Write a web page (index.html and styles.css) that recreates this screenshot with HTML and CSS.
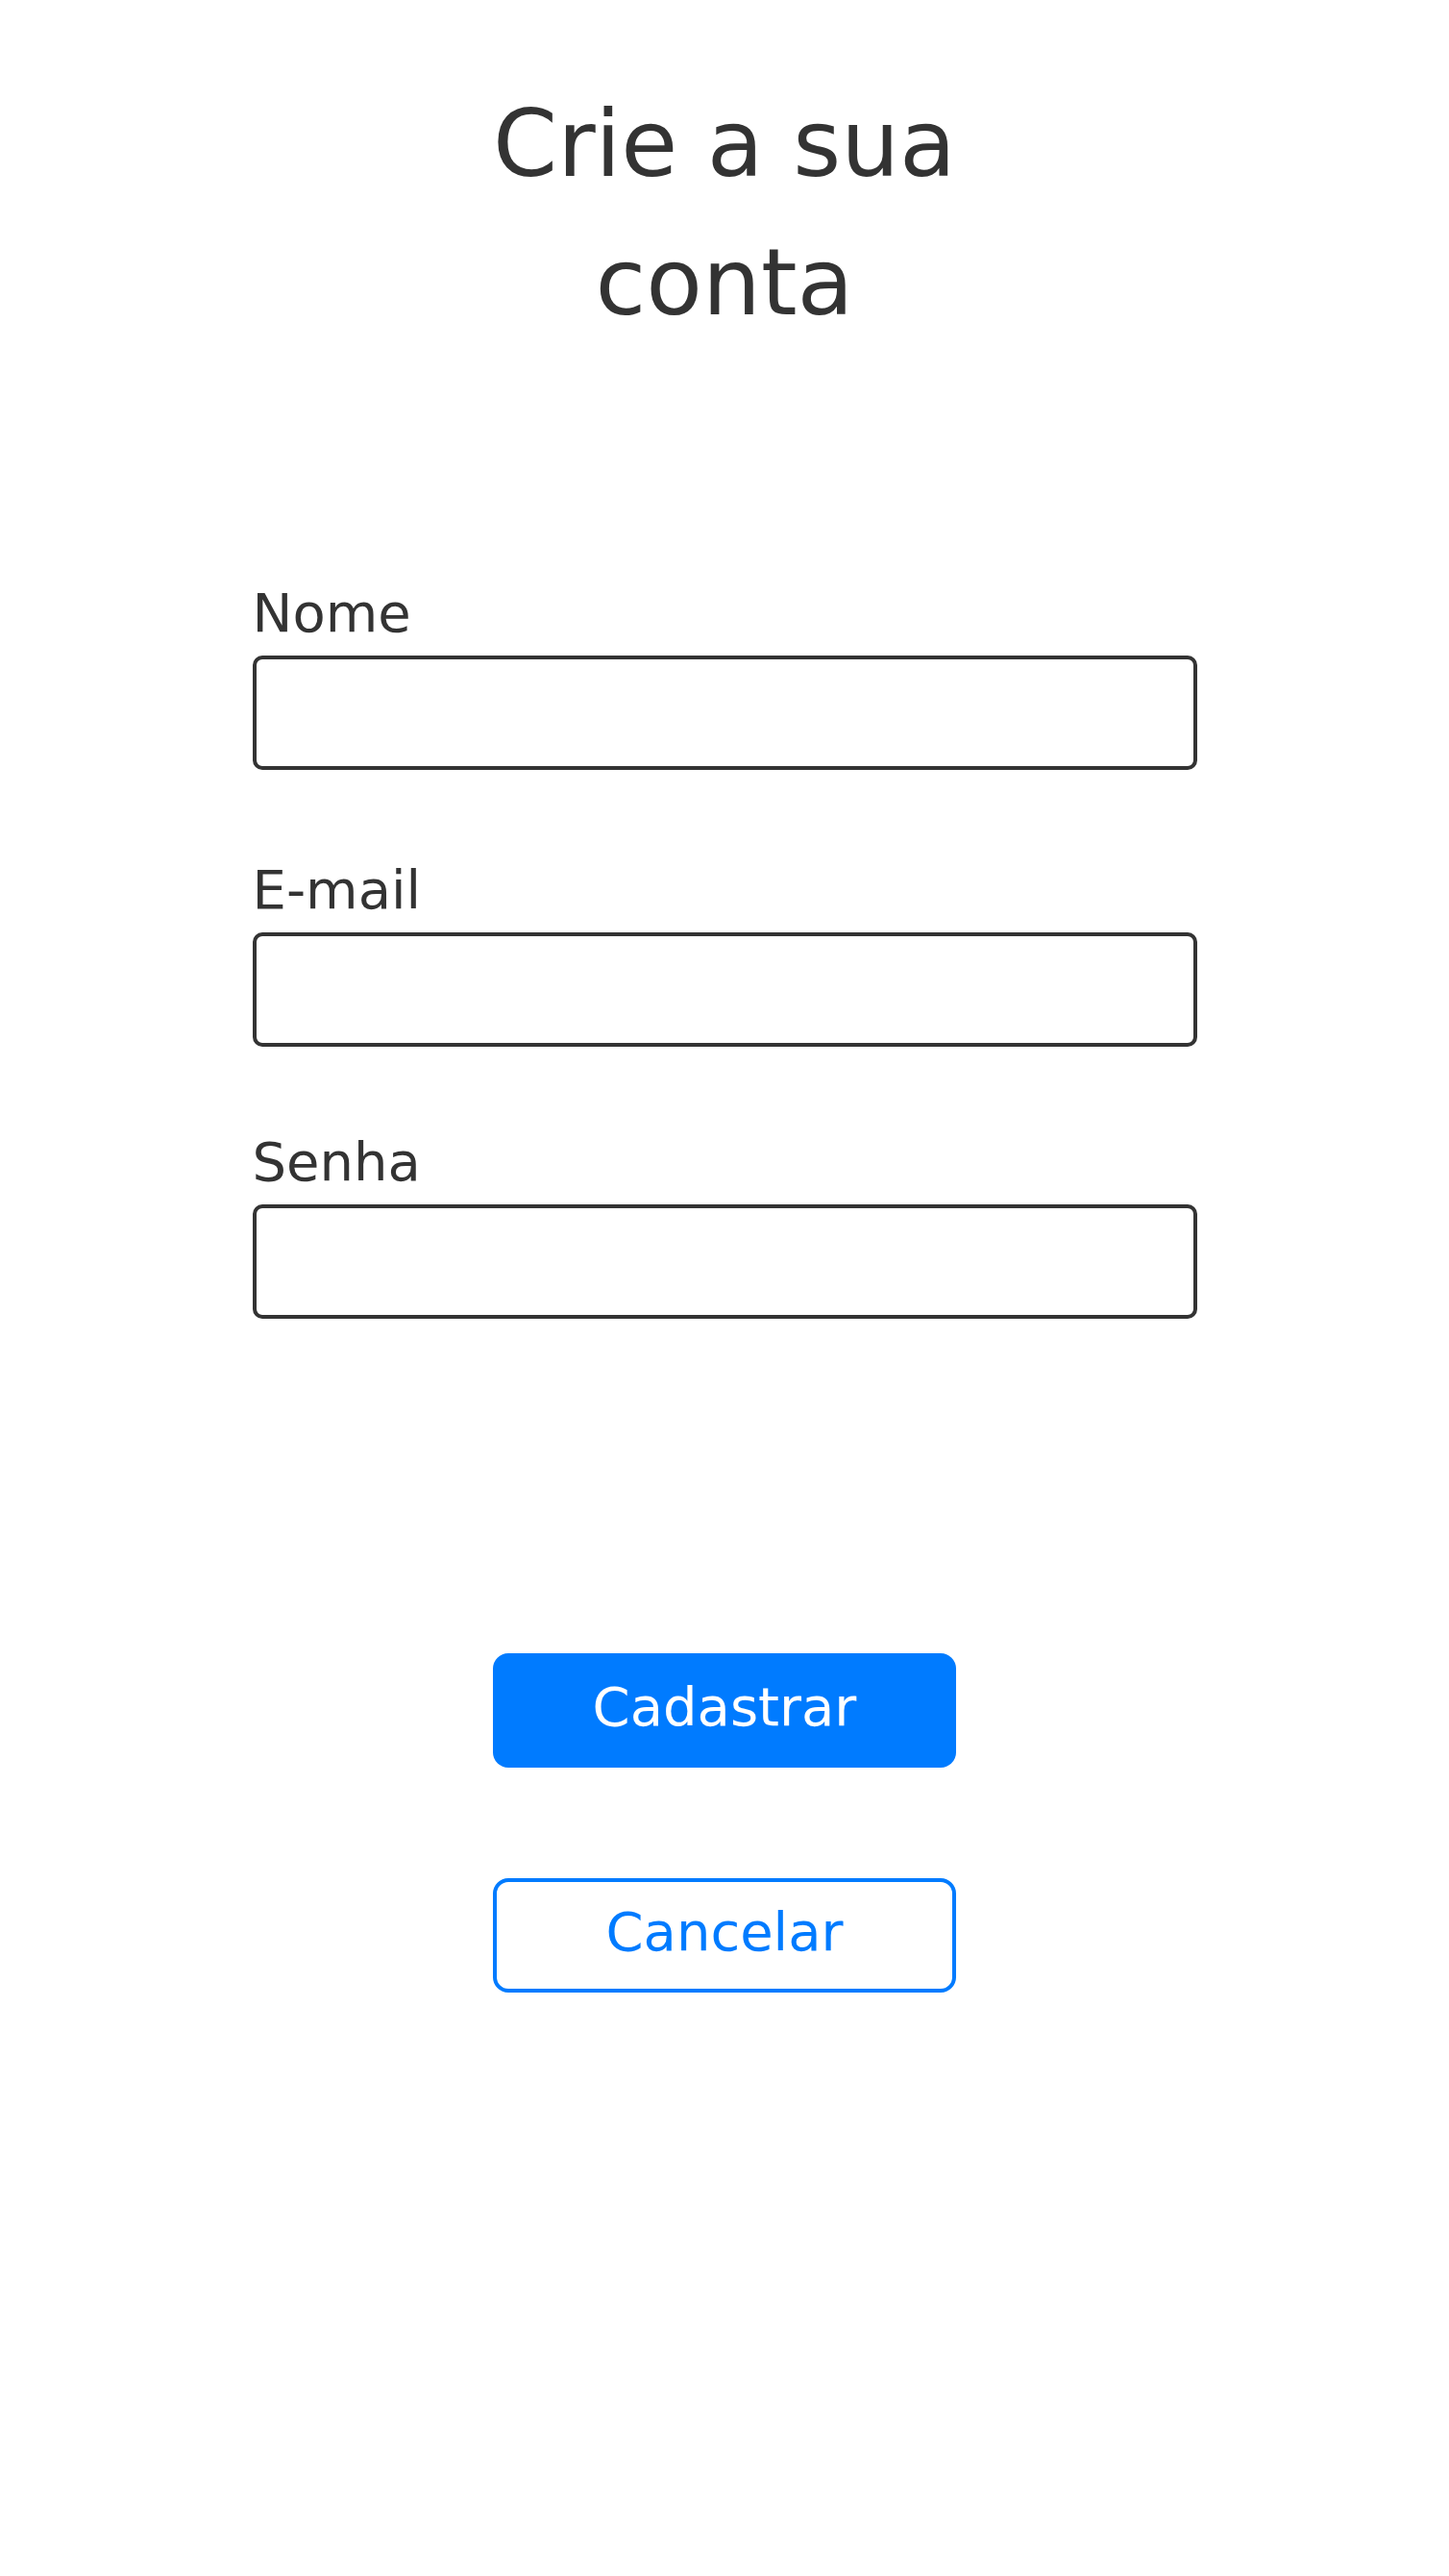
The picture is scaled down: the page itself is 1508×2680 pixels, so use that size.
FILE: index.html
```html
<!DOCTYPE html>
<html lang="pt-BR">
<head>
<meta charset="utf-8">
<title>Crie a sua conta</title>
<link rel="stylesheet" href="styles.css">
</head>
<body>
<main class="screen">
  <h1 class="title">Crie a sua conta</h1>
  <form class="form">
    <div class="field">
      <label class="label" for="nome">Nome</label>
      <input class="input" id="nome" type="text">
    </div>
    <div class="field field-email">
      <label class="label" for="email">E-mail</label>
      <input class="input" id="email" type="email">
    </div>
    <div class="field field-senha">
      <label class="label" for="senha">Senha</label>
      <input class="input" id="senha" type="password">
    </div>
  </form>
  <div class="actions">
    <button class="btn btn-primary" type="button">Cadastrar</button>
    <button class="btn btn-outline" type="button">Cancelar</button>
  </div>
</main>
</body>
</html>
```
FILE: styles.css
```css
* { box-sizing: border-box; }
html, body {
  margin: 0;
  padding: 0;
  background: #ffffff;
}
body {
  font-family: "DejaVu Sans", "Liberation Sans", sans-serif;
  color: #333333;
}
.screen {
  display: flex;
  flex-direction: column;
  align-items: center;
  min-height: 2680px;
}
.title {
  margin: 78px 0 0;
  width: 600px;
  font-size: 96px;
  line-height: 144px;
  font-weight: normal;
  text-align: center;
  color: #333333;
}
.form {
  width: 983px;
  margin-top: 239px;
  display: flex;
  flex-direction: column;
}
.field {
  display: flex;
  flex-direction: column;
}
.field-email { margin-top: 92px; }
.field-senha { margin-top: 87px; }
.label {
  font-size: 56px;
  line-height: 65px;
  color: #333333;
  margin-bottom: 12px;
  padding-left: 0;
}
.input {
  display: block;
  width: 100%;
  height: 119px;
  border: 4px solid #333333;
  border-radius: 10px;
  background: #ffffff;
  font-family: inherit;
  font-size: 56px;
  padding: 0 20px;
  outline: none;
}
.actions {
  margin-top: 348px;
  display: flex;
  flex-direction: column;
  align-items: center;
  gap: 115px;
}
.btn {
  width: 482px;
  height: 119px;
  border-radius: 16px;
  font-family: "DejaVu Sans", "Liberation Sans", sans-serif;
  font-size: 56px;
  line-height: 65px;
  display: flex;
  align-items: center;
  justify-content: center;
  padding: 0 0 8px;
  cursor: pointer;
}
.btn-primary {
  background: #007bff;
  color: #ffffff;
  border: none;
}
.btn-outline {
  background: #ffffff;
  color: #007bff;
  border: 4px solid #007bff;
}
```
